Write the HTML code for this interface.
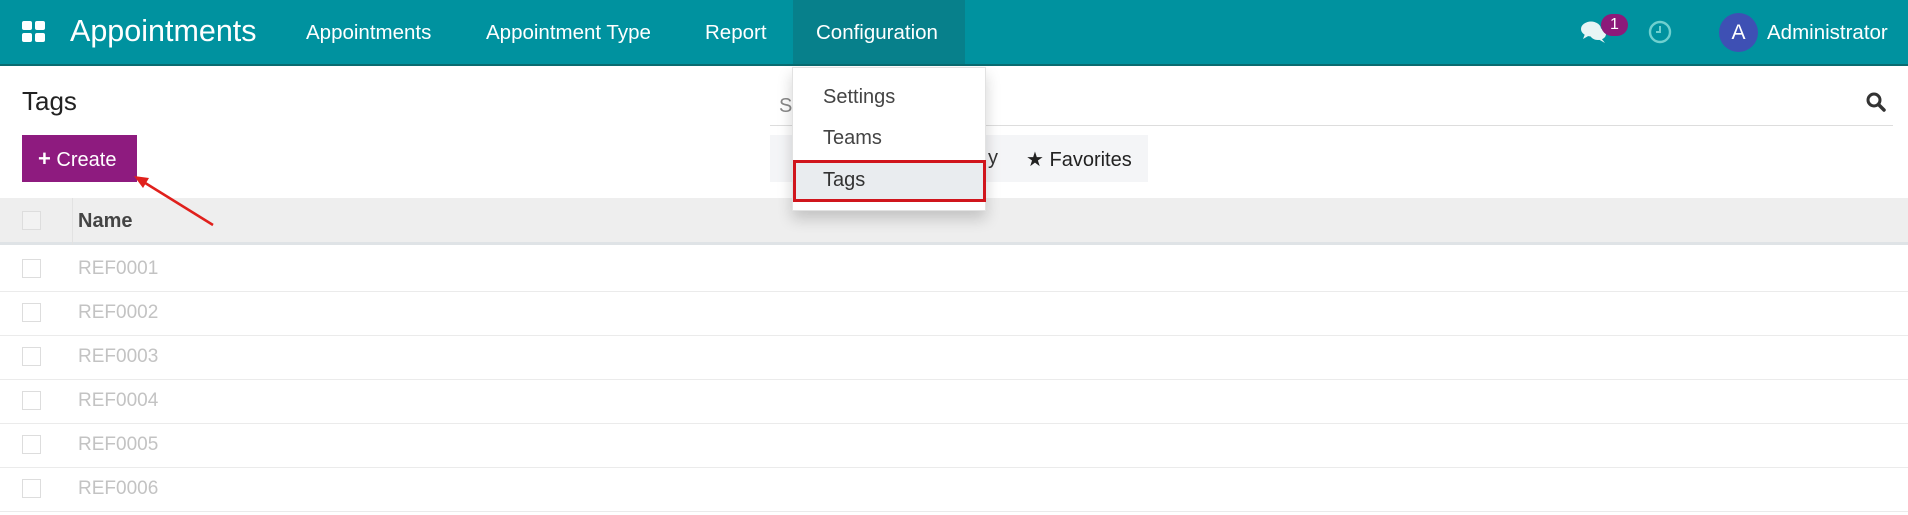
<!DOCTYPE html>
<html><head><style>
*{margin:0;padding:0;box-sizing:border-box}
body{width:1908px;height:515px;overflow:hidden;background:#fff;font-family:"Liberation Sans",sans-serif;position:relative}
.abs{position:absolute}
.nav{left:0;top:0;width:1908px;height:66px;background:#00929f;border-bottom:2px solid #0a6b70}
.nav span{position:absolute;color:#fff;font-size:20.5px;top:21px}
.row{position:absolute;left:0;width:1908px;height:44px;border-bottom:1px solid #ebebeb}
.cb{position:absolute;left:22px;width:19px;height:19px;border:1px solid #ddd;background:#fff}
.row .t{position:absolute;left:78px;font-size:19px;color:#c3c3c3}
</style></head><body>
<div class="abs nav">
 <div class="abs" style="left:793px;top:0;width:172px;height:64px;background:#07808b"></div>
 <svg class="abs" style="left:22px;top:21px" width="24" height="22"><rect x="0" y="0" width="10" height="9" rx="2" fill="#fff"/><rect x="13" y="0" width="10" height="9" rx="2" fill="#fff"/><rect x="0" y="12" width="10" height="9" rx="2" fill="#fff"/><rect x="13" y="12" width="10" height="9" rx="2" fill="#fff"/></svg>
 <span style="left:70px;top:14px;font-size:30.5px">Appointments</span>
 <span style="left:306px">Appointments</span>
 <span style="left:486px">Appointment Type</span>
 <span style="left:705px">Report</span>
 <span style="left:816px">Configuration</span>
 <svg class="abs" style="left:1581px;top:20px" width="28" height="24"><ellipse cx="10" cy="9" rx="10" ry="7.5" fill="#e8f5f5"/><path d="M4 14 L2 19 L9 15Z" fill="#e8f5f5"/><ellipse cx="17" cy="14" rx="8" ry="6" fill="#e8f5f5"/><path d="M20 18 L24 23 L17 19Z" fill="#e8f5f5"/></svg>
 <div class="abs" style="left:1601px;top:14px;width:27px;height:22px;border-radius:11px;background:#8c1a7a;color:#fff;font-size:16px;text-align:center;line-height:22px">1</div>
 <svg class="abs" style="left:1648px;top:20px" width="24" height="24"><circle cx="12" cy="12" r="10" fill="none" stroke="#6fd0cf" stroke-width="2.4"/><path d="M12 6 V12 H8" fill="none" stroke="#6fd0cf" stroke-width="2"/></svg>
 <div class="abs" style="left:1719px;top:13px;width:39px;height:39px;border-radius:50%;background:#3e50b4;color:#fff;font-size:21px;text-align:center;line-height:39px">A</div>
 <span style="left:1767px">Administrator</span>
</div>
<div class="abs" style="left:22px;top:86px;font-size:26px;color:#222">Tags</div>
<div class="abs" style="left:22px;top:135px;width:115px;height:47px;background:#8e1b7f;color:#fff;font-size:20px;line-height:47px;padding-left:16px"><b style="font-size:22px">+</b> Create</div>
<div class="abs" style="left:779px;top:95px;font-size:20px;color:#888">S</div>
<div class="abs" style="left:770px;top:125px;width:1123px;height:1px;background:#ddd"></div>
<svg class="abs" style="left:1866px;top:92px" width="20" height="20"><circle cx="8" cy="8" r="6" fill="none" stroke="#333" stroke-width="3"/><path d="M12.5 12.5 L18 18" stroke="#333" stroke-width="3.5" stroke-linecap="round"/></svg>
<div class="abs" style="left:770px;top:135px;width:378px;height:47px;background:#f4f5f7"></div>
<div class="abs" style="left:988px;top:147px;font-size:20px;color:#333">y</div>
<div class="abs" style="left:1026px;top:147px;font-size:20px;color:#222">★ Favorites</div>
<div class="abs" style="left:0;top:198px;width:1908px;height:47px;background:#eee;border-bottom:3px solid #dfe3e6"></div>
<div class="abs" style="left:72px;top:198px;width:1px;height:47px;background:#e2e2e2"></div>
<div class="cb" style="top:211px;background:#f2f2f2"></div>
<div class="abs" style="left:78px;top:210px;font-size:20px;font-weight:bold;color:#444">Name</div>
<div class="row" style="top:248px"><div class="cb" style="top:11px"></div><div class="t" style="top:10px">REF0001</div></div>
<div class="row" style="top:292px"><div class="cb" style="top:11px"></div><div class="t" style="top:10px">REF0002</div></div>
<div class="row" style="top:336px"><div class="cb" style="top:11px"></div><div class="t" style="top:10px">REF0003</div></div>
<div class="row" style="top:380px"><div class="cb" style="top:11px"></div><div class="t" style="top:10px">REF0004</div></div>
<div class="row" style="top:424px"><div class="cb" style="top:11px"></div><div class="t" style="top:10px">REF0005</div></div>
<div class="row" style="top:468px"><div class="cb" style="top:11px"></div><div class="t" style="top:10px">REF0006</div></div>
<div class="abs" style="left:792px;top:67px;width:194px;height:144px;background:#fff;border:1px solid #e2e2e2;box-shadow:0 8px 14px rgba(0,0,0,.18)">
 <div class="abs" style="left:30px;top:18px;font-size:20px;color:#444">Settings</div>
 <div class="abs" style="left:30px;top:59px;font-size:20px;color:#444">Teams</div>
 <div class="abs" style="left:0;top:92px;width:193px;height:42px;background:#e9ecef;border:3px solid #d0151c"></div>
 <div class="abs" style="left:30px;top:101px;font-size:20px;color:#333">Tags</div>
</div>
<svg class="abs" style="left:0;top:0" width="300" height="260"><line x1="213" y1="225" x2="142" y2="181" stroke="#e0201c" stroke-width="2.5"/><path d="M134 176 L149 178 L143 188Z" fill="#e0201c"/></svg>
</body></html>
